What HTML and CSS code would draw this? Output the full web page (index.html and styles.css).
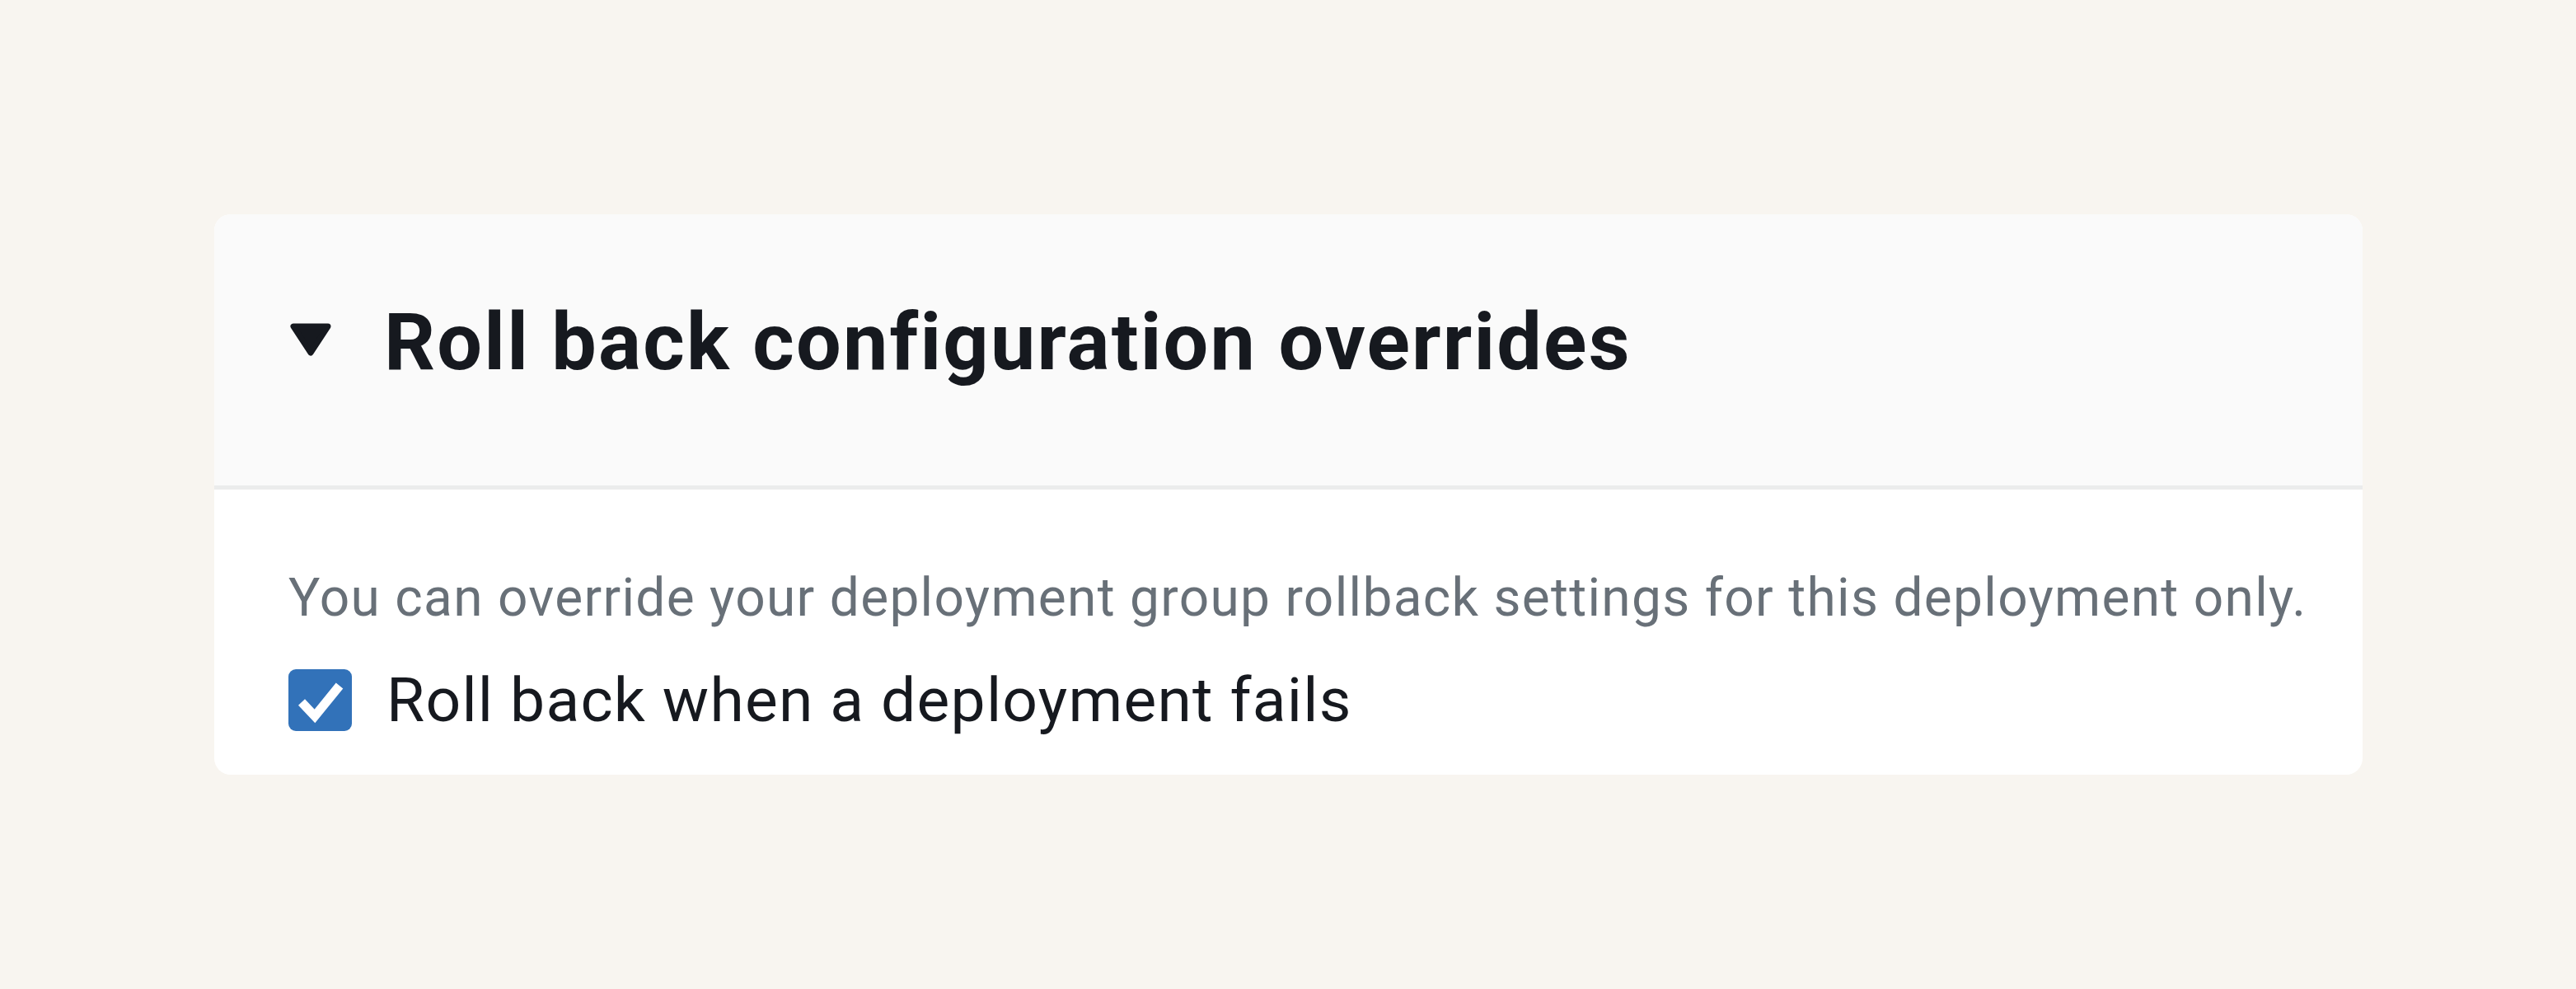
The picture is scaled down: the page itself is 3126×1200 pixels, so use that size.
FILE: index.html
```html
<!DOCTYPE html>
<html lang="en">
<head>
<meta charset="utf-8">
<title>Roll back configuration overrides</title>
<link rel="stylesheet" href="styles.css">
</head>
<body>
<section class="panel">
  <header class="panel-header">
    <svg class="caret" viewBox="0 0 52 40" width="52" height="40" aria-hidden="true">
      <path d="M5 4 L47 4 L26 36 Z" fill="#16191f" stroke="#16191f" stroke-width="7" stroke-linejoin="round"/>
    </svg>
    <h2 class="panel-title">Roll back configuration overrides</h2>
  </header>
  <div class="panel-body">
    <p class="description">You can override your deployment group rollback settings for this deployment only.</p>
    <label class="check-row">
      <span class="checkbox">
        <svg viewBox="0 0 77 75" width="77" height="75" aria-hidden="true">
          <polyline points="16,40 32,57 62,20" fill="none" stroke="#ffffff" stroke-width="11" stroke-linecap="butt" stroke-linejoin="miter"/>
        </svg>
      </span>
      <span class="check-label">Roll back when a deployment fails</span>
    </label>
  </div>
</section>
</body>
</html>
```
FILE: styles.css
```css
html, body {
  margin: 0;
  padding: 0;
}
body {
  background: #f8f5f0;
  font-family: Roboto, "Noto Sans", "Liberation Sans", sans-serif;
  color: #16191f;
  padding: 260px 0 0 260px;
}
.panel {
  width: 2607px;
  background: #ffffff;
  border-radius: 20px;
  overflow: hidden;
}
.panel-header {
  box-sizing: border-box;
  height: 334px;
  background: #fafafa;
  border-bottom: 5px solid #ebecec;
  display: flex;
  align-items: center;
  padding-left: 91px;
  padding-bottom: 19px;
  gap: 63px;
}
.caret {
  display: block;
  flex: none;
  margin-top: -6px;
}
.panel-title {
  margin: 0;
  font-size: 97px;
  line-height: 1.2;
  font-weight: 700;
  color: #16191f;
  letter-spacing: 2.2px;
}
.panel-body {
  padding: 94px 0 46px 90px;
}
.description {
  margin: 0;
  font-size: 64px;
  line-height: 76px;
  color: #687078;
  letter-spacing: 1.3px;
}
.check-row {
  display: flex;
  align-items: center;
  gap: 42px;
  margin-top: 40px;
}
.checkbox {
  flex: none;
  width: 77px;
  height: 75px;
  border-radius: 9px;
  background: #3272b9;
  display: block;
}
.checkbox svg {
  display: block;
}
.check-label {
  font-size: 75px;
  line-height: 90px;
  color: #16191f;
  letter-spacing: 1.2px;
}
```
